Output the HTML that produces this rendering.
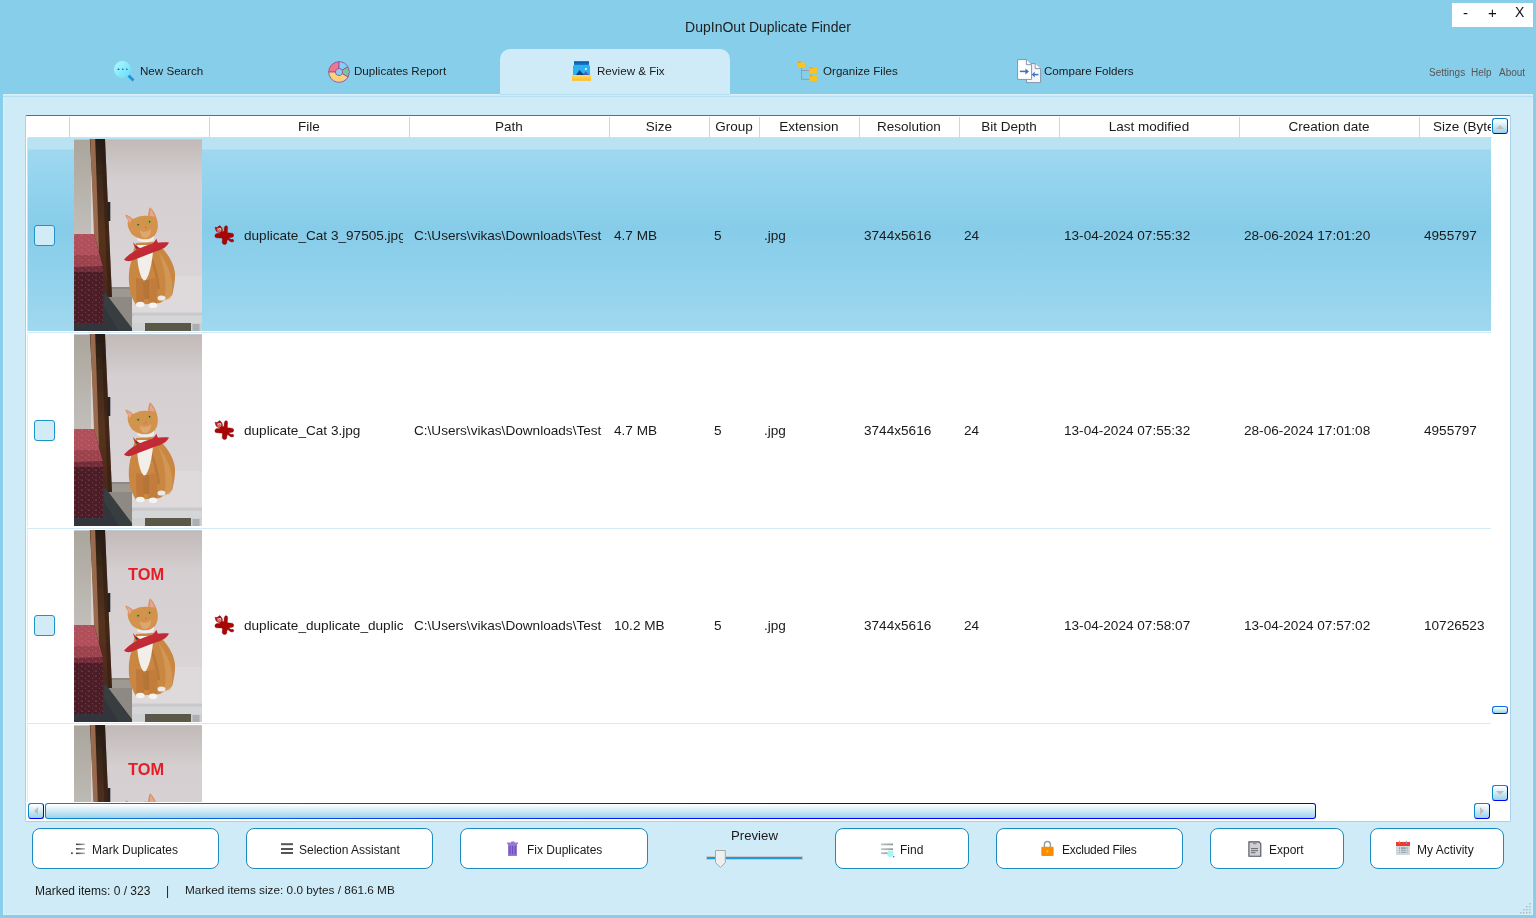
<!DOCTYPE html>
<html><head><meta charset="utf-8">
<style>
*{margin:0;padding:0;box-sizing:border-box}
html,body{width:1536px;height:918px;overflow:hidden}
body{background:#87CEEB;position:relative;font-family:"Liberation Sans",sans-serif;color:#1a1a1a}
.a{position:absolute}
.t{position:absolute;white-space:pre;line-height:1;will-change:transform}
.tab{font-size:11.6px;color:#1a1a1a}
.hd{font-size:13.5px;color:#1a1a1a;text-align:center}
.cell{font-size:13.6px;color:#1a1a1a;overflow:hidden}
.btn{position:absolute;top:828px;height:41px;background:#fff;border:1px solid #1b8cbf;border-radius:8px}
.bt{font-size:12px;color:#1a1a1a}
.sep{position:absolute;top:117px;width:1px;height:20px;background:#d4d4d4}
.chk{position:absolute;left:34px;width:21px;height:21px;border:1.3px solid #1f95c6;border-radius:3px;background:#d2ecf7}
.sb{position:absolute;border:1px solid #0000f0;border-color:#0a88c8 #0000ff #0000ff #0a88c8;border-radius:3px;background:linear-gradient(#fdfeff 5%,#cfeaf6 50%,#98d3ec)}
</style></head><body>
<svg width="0" height="0" style="position:absolute">
<defs>
<filter id="bl" x="-5%" y="-5%" width="110%" height="110%"><feGaussianBlur stdDeviation="0.6"/></filter>
<linearGradient id="bgg" x1="0" y1="0" x2="0" y2="1"><stop offset="0" stop-color="#c2bab8"/><stop offset="0.22" stop-color="#d5cfd1"/><stop offset="1" stop-color="#dcd7da"/></linearGradient>
<linearGradient id="bgl" x1="0" y1="0" x2="0" y2="1"><stop offset="0" stop-color="#aaa69c"/><stop offset="0.5" stop-color="#c2beba"/><stop offset="1" stop-color="#c8c4c2"/></linearGradient>
<linearGradient id="postg" x1="0" y1="0" x2="0" y2="1"><stop offset="0" stop-color="#261c12"/><stop offset="0.25" stop-color="#3e2a1a"/><stop offset="0.6" stop-color="#58321f"/><stop offset="1" stop-color="#4a2a1a"/></linearGradient>
<pattern id="speck" width="7" height="5" patternUnits="userSpaceOnUse"><circle cx="1" cy="1.2" r="0.6" fill="#f0c8cc"/><circle cx="4.5" cy="3.3" r="0.5" fill="#e8b0b8"/><circle cx="6" cy="0.5" r="0.4" fill="#d89098"/></pattern>
<symbol id="cat" viewBox="0 0 128 192">
<g filter="url(#bl)">
<rect x="0" y="0" width="128" height="192" fill="url(#bgg)"/>
<rect x="0" y="0" width="17" height="192" fill="url(#bgl)"/><rect x="0" y="0" width="128" height="1" fill="#c4c8cc"/>
<!-- floor -->
<rect x="30" y="148" width="30" height="44" fill="#8e8982"/>
<rect x="34" y="150" width="24" height="8" fill="#a8a49e" opacity="0.6"/>
<!-- post -->
<path d="M15.8 0 L31 0 L38 158 L25 158 Z" fill="url(#postg)"/>
<path d="M27 0 L31 0 L38 158 L34 158 Z" fill="#2e1a10" opacity="0.5"/>
<path d="M16.2 0 L21.2 0 L26.5 158 L22.5 158 Z" fill="#9a6a50"/>
<rect x="33.5" y="63" width="2.8" height="19" fill="#262420"/>
<!-- ottoman -->
<path d="M0 95 L20 95 L29 128 L29 185 L0 185 Z" fill="#4c1f28"/>
<path d="M0 95 L20 95 L28.5 127 L0 128 Z" fill="#b0505a"/>
<path d="M0 116 L25 116 L28.5 127 L29 133 L0 133 Z" fill="#8c3644" opacity="0.55"/>
<path d="M0 95 L20 95 L29 128 L29 185 L0 185 Z" fill="url(#speck)" opacity="0.35"/>
<!-- dark floor triangle -->
<path d="M30.5 153 L60 192 L0 192 L0 184 L29 184 L29 153 Z" fill="#30353a"/>
<path d="M30.5 153 L60 192 L45 192 L30 168 Z" fill="#3c4246" opacity="0.6"/>
<!-- stool -->
<path d="M58 137 L125 137 Q128 137 128 140 L128 174 L58 174 Z" fill="#dedadc"/>
<rect x="58" y="173.5" width="70" height="3.3" fill="#c9c9cb"/>
<rect x="58" y="176.8" width="70" height="7.4" fill="#d4d6d8"/>
<rect x="58" y="184" width="13" height="8" fill="#cfd1d3"/>
<rect x="71" y="184" width="46" height="8" fill="#5a5848"/>
<rect x="117" y="184" width="11" height="8" fill="#cdd0d2"/>
<rect x="118.5" y="185" width="7" height="7" fill="#8a8e90" opacity="0.5"/>
<!-- cat body -->
<path d="M58 120 C55 128 54 138 55.5 148 C56 156 60 162 62 166 L86 164 C92 160 98 158 98.5 155 C100 148 101.5 140 101 134 C100 126 96 118 90 111 C86 107 82 104 80 103 L62 104 C60 108 59 114 58 120 Z" fill="#c98742"/>
<path d="M84 112 C90 120 96 130 98 142 C99 150 98 156 96 160 L90 161 C93 148 92 130 84 112 Z" fill="#d9a060" opacity="0.6"/>
<path d="M78 118 C82 128 85 138 86 150 L83 150 C82 140 80 128 76 120 Z" fill="#a86a30" opacity="0.5"/>
<path d="M63 106 C62.5 122 65 136 70 143 C75 139 78.5 124 79.5 106 Z" fill="#f2eeea"/>
<!-- legs -->
<path d="M62 139 C62 148 62 158 63 166 L70 166 C70 157 70 147 69 140 Z" fill="#bf7a3a"/>
<path d="M75 140 C74 149 74 158 75 167 L83 167 C83 158 84 148 83 139 Z" fill="#c27c3a"/>
<path d="M69 141 L75 141 L75 160 L70 160 Z" fill="#a8682e" opacity="0.6"/>
<ellipse cx="66.3" cy="165.5" rx="4.3" ry="2.8" fill="#f6f4f2"/>
<ellipse cx="79" cy="166.3" rx="4.3" ry="2.8" fill="#f6f4f2"/>
<ellipse cx="87.5" cy="159" rx="4" ry="2.6" fill="#eceae8"/>
<!-- head -->
<path d="M51.4 75.4 C54 76 57 78 59 80 C64 77 70 76 74 77 C74.5 73 75 70 76 68.2 C79 71 81.5 75 82.5 79 C84.5 84 84.5 92 81 96 C78 100 74 100.5 71 100 C66 100 60 98 57 94 C54 90 53 85 54 81 C52.5 79 51.6 77 51.4 75.4 Z" fill="#d4934e"/>
<path d="M52.5 76.5 L58 80 L55.5 84.5 Z" fill="#e7a49a"/>
<path d="M76.5 69.5 L81 77.5 L75.5 77 Z" fill="#e7a49a"/>
<path d="M66 91 C68 93.5 74 93.5 77 90 C77.5 94 75 98.5 71.5 99 C68 99 66 95.5 66 91 Z" fill="#dca870"/><path d="M64 99 C68 102 76 101 80 97 L80 101 C76 104 68 104 63 101 Z" fill="#f2ece6"/>
<circle cx="64" cy="85.6" r="2.1" fill="#a8a444"/><circle cx="64.2" cy="85.8" r="0.8" fill="#3a3020"/>
<circle cx="75.4" cy="82.6" r="2.1" fill="#a8a444"/><circle cx="75.6" cy="82.8" r="0.8" fill="#3a3020"/>
<circle cx="71.8" cy="88.5" r="1.1" fill="#d0706a"/>
<!-- bandana -->
<path d="M50 120.5 C55 115 62 110.5 70 107.5 C78 104.5 86 102.5 95 103.5 C93 108 88 110.5 83 112 C76 114.5 66 118.5 58 121.5 C55 122.5 52 122.5 50 120.5 Z" fill="#c02a36"/>
<path d="M59 103 C62 107.5 66 109.5 70 109.5 C76 108 80 104 82.4 99.8 L84 104 C81 109.5 76 113 70 114 C65 114 60.5 110 59 103 Z" fill="#c42c38"/>
<circle cx="62.8" cy="108.6" r="1" fill="#304840"/>
</g>
</symbol>
<symbol id="irf" viewBox="0 0 20 20">
<path d="M1 2.2 L3 2.6 L5.9 0.6 L7.6 2.4 C8.4 3.6 8.6 5 8.4 6.4 L10.2 6.6 C10 4.5 10 2 11 1.2 C12 0.5 13.6 0.8 13.6 2.5 C13.6 4.5 13.2 6.2 13.4 7.8 C15 8 17 8.2 18.6 8.4 C19.8 8.8 20 10.8 19 12 C17.6 12.6 16 12.4 15.2 12.8 C15.6 13.8 16.4 14.4 17.4 14.4 C18.6 14.2 19.8 14.6 19.8 15.8 C19.6 17 18 17.2 17 16.8 C15.6 16.2 14.6 15.6 14 14.6 C13.2 15 12.8 16 12.8 17.4 C12.8 19 11.2 19.6 10 19.4 C8.6 19 8 18 8.2 16.8 C8.4 15.2 8.6 14 8 13 C6.4 12.8 4.4 13 2.6 12.8 C1.2 12.6 0.8 11.4 1 10.2 C1.2 8.8 3 8.4 4.6 8.6 C5.4 8.6 6 8.2 6.2 7.6 C4.8 7.4 3 7.2 2.2 6 C1.4 4.8 1.6 3.4 1 2.2 Z" fill="#a80606" stroke="#7a0000" stroke-width="0.4"/>
<path d="M2.6 3.6 C3.6 2.6 6 2.2 7.4 3.4 C8 4.8 7.6 6.4 6.4 7.2 C5 7.6 3.4 7 2.8 5.8 Z" fill="#d86060"/>
<ellipse cx="5.8" cy="4.3" rx="1.4" ry="1" fill="#f4e8e8"/>
<circle cx="5.9" cy="4.5" r="0.5" fill="#402020"/>
</symbol>
</defs>
</svg>


<!-- title -->
<div class="t" style="left:0;width:1536px;text-align:center;top:19.5px;font-size:14px;color:#1e1e1e">DupInOut Duplicate Finder</div>

<!-- window controls -->
<div class="a" style="left:1452px;top:3px;width:81px;height:24px;background:#fff"></div>
<div class="t" style="left:1462.7px;top:5px;font-size:15px;color:#111">-</div>
<div class="t" style="left:1488.2px;top:5px;font-size:15px;color:#111">+</div>
<div class="t" style="left:1514.7px;top:5px;font-size:14px;color:#111">X</div>

<!-- active tab -->
<div class="a" style="left:500px;top:49px;width:230px;height:46px;background:#cfebf7;border-radius:10px 10px 0 0"></div>


<!-- tab icons -->
<svg class="a" style="left:113px;top:60px" width="24" height="24" viewBox="0 0 24 24">
<defs><linearGradient id="mg" x1="0" y1="0" x2="1" y2="1"><stop offset="0" stop-color="#b2fbfe"/><stop offset="1" stop-color="#62daf6"/></linearGradient></defs>
<path d="M15.5 15.5 L20.5 20.5" stroke="#1d94e0" stroke-width="2.8" stroke-linecap="butt"/>
<circle cx="9.5" cy="9.5" r="8.5" fill="url(#mg)"/>
<path d="M4.1 9.9 L5.5 8 L6.9 9.9 Z M8.8 9.9 L9.6 8 L11 9.9 Z M13 9.9 L13.6 8 L15.1 9.9 Z" fill="#2a70d0"/>
</svg>
<svg class="a" style="left:327px;top:60px" width="24" height="24" viewBox="0 0 24 24">
<g stroke="#9a4e9c" stroke-width="0.9" stroke-linejoin="round">
<path d="M12.00 1.70 A10.3 10.3 0 0 0 1.70 12.00 L8.40 12.00 A3.6 3.6 0 0 1 12.00 8.40 Z" fill="#f0768f"/>
<path d="M20.92 6.85 A10.3 10.3 0 0 0 12.00 1.70 L12.00 8.40 A3.6 3.6 0 0 1 15.12 10.20 Z" fill="#86cef4"/>
<path d="M21.09 16.84 A10.3 10.3 0 0 0 20.92 6.85 L15.12 10.20 A3.6 3.6 0 0 1 15.18 13.69 Z" fill="#6ccc9c"/>
<path d="M1.70 12.00 A10.3 10.3 0 0 0 21.09 16.84 L15.18 13.69 A3.6 3.6 0 0 1 8.40 12.00 Z" fill="#fcd27e"/>
</g>
</svg>
<svg class="a" style="left:572px;top:61px" width="20" height="20" viewBox="0 0 20 20">
<defs><linearGradient id="rbar" x1="0" y1="0" x2="0" y2="1"><stop offset="0" stop-color="#4a8ccc"/><stop offset="0.25" stop-color="#0b5aa8"/><stop offset="1" stop-color="#1a8ae0"/></linearGradient>
<linearGradient id="ryel" x1="0" y1="0" x2="0" y2="1"><stop offset="0" stop-color="#ffdc64"/><stop offset="1" stop-color="#ffbc1c"/></linearGradient></defs>
<rect x="2" y="0" width="15" height="4.7" fill="url(#rbar)"/>
<rect x="1" y="4.6" width="17" height="9.6" fill="#2bb2ec"/>
<path d="M10 14 L13.8 10.6 L17.2 14 Z" fill="#4a5cc8"/>
<path d="M4 14 L7.5 9 L12 14 Z" fill="#163f86"/>
<circle cx="13.9" cy="8" r="1" fill="#fff"/>
<rect x="0" y="14" width="19" height="5.8" fill="url(#ryel)"/>
</svg>
<svg class="a" style="left:797px;top:61px" width="21" height="21" viewBox="0 0 21 21">
<path d="M4.5 6.5 V18.3 H12.5 M4.5 9.5 H12.5" stroke="#8c9aa6" stroke-width="0.9" fill="none"/>
<rect x="0.8" y="1.6" width="7.2" height="5.4" fill="#fcc21e"/><rect x="0.8" y="0.6" width="3" height="1.4" rx="0.5" fill="#f3a000"/>
<rect x="12.5" y="7" width="7.4" height="5.2" fill="#fcc21e"/><rect x="12.5" y="6.2" width="3" height="1.3" rx="0.5" fill="#f3a000"/>
<rect x="12.5" y="15" width="7.4" height="5" fill="#fcc21e"/><rect x="12.5" y="14.2" width="3" height="1.3" rx="0.5" fill="#f3a000"/>
</svg>
<svg class="a" style="left:1017px;top:59px" width="25" height="25" viewBox="0 0 25 25">
<path d="M9.5 4.6 H18.2 L23.6 9.6 V23.6 H9.5 Z" fill="#f2f7fd" stroke="#8894a6" stroke-width="1"/>
<path d="M18.2 4.6 V9.6 H23.6" fill="#fff" stroke="#8894a6" stroke-width="1"/>
<path d="M0.6 0.6 H9.4 L14.6 5.7 V20.4 H0.6 Z" fill="#fff" stroke="#8894a6" stroke-width="1"/>
<path d="M9.4 0.6 V5.7 H14.6" fill="#fff" stroke="#8894a6" stroke-width="1"/>
<path d="M2.8 12.4 H9.5" stroke="#3f74bc" stroke-width="1.5"/><path d="M8.4 9.5 L12 12.4 L8.4 15.4 Z" fill="#3f74bc"/>
<path d="M21.4 15.6 H17" stroke="#3f74bc" stroke-width="1.5"/><path d="M17.7 12.8 L14.8 15.6 L17.7 18.6 Z" fill="#3f74bc"/>
</svg>

<!-- tab labels -->
<div class="t tab" style="left:140px;top:65px">New Search</div>
<div class="t tab" style="left:354px;top:65px">Duplicates Report</div>
<div class="t tab" style="left:597px;top:65px">Review &amp; Fix</div>
<div class="t tab" style="left:823px;top:65px">Organize Files</div>
<div class="t tab" style="left:1044px;top:65px">Compare Folders</div>
<div class="t" style="left:1429px;top:68px;font-size:10px;color:#5a5454">Settings</div>
<div class="t" style="left:1471px;top:68px;font-size:10px;color:#5a5454">Help</div>
<div class="t" style="left:1499px;top:68px;font-size:10px;color:#5a5454">About</div>

<!-- main panel -->
<div class="a" style="left:3px;top:94px;width:1530px;height:821px;background:#cfebf7;border-left:1px solid #dcf0f9;border-right:1px solid #d8eef8;border-bottom:1px solid #d8eef8"></div>
<div class="a" style="left:3px;top:94px;width:1530px;height:1px;background:#d9eff9"></div><div class="a" style="left:500px;top:94px;width:230px;height:1px;background:#b4dff0"></div><div class="a" style="left:3px;top:96px;width:1530px;height:1px;background:#b4dff0"></div>

<!-- grid -->
<div class="a" style="left:25px;top:115px;width:1486px;height:707px;background:#fff;border:1px solid #a9d1e8;border-top:1px solid #3b77af;border-radius:2px"></div>

<!-- header separators -->
<div class="sep" style="left:69px"></div>
<div class="sep" style="left:209px"></div>
<div class="sep" style="left:409px"></div>
<div class="sep" style="left:609px"></div>
<div class="sep" style="left:709px"></div>
<div class="sep" style="left:759px"></div>
<div class="sep" style="left:859px"></div>
<div class="sep" style="left:959px"></div>
<div class="sep" style="left:1059px"></div>
<div class="sep" style="left:1239px"></div>
<div class="sep" style="left:1419px"></div>
<div class="a" style="left:28px;top:137px;width:1464px;height:1px;background:#dcdcdc"></div>

<div class="t hd" style="left:209px;width:200px;top:120px">File</div>
<div class="t hd" style="left:409px;width:200px;top:120px">Path</div>
<div class="t hd" style="left:609px;width:100px;top:120px">Size</div>
<div class="t hd" style="left:709px;width:50px;top:120px">Group</div>
<div class="t hd" style="left:759px;width:100px;top:120px">Extension</div>
<div class="t hd" style="left:859px;width:100px;top:120px">Resolution</div>
<div class="t hd" style="left:959px;width:100px;top:120px">Bit Depth</div>
<div class="t hd" style="left:1059px;width:180px;top:120px">Last modified</div>
<div class="t hd" style="left:1239px;width:180px;top:120px">Creation date</div>
<div class="t hd" style="left:1419px;width:72px;top:120px;text-align:left;padding-left:14px;overflow:hidden">Size (Bytes)</div>

<div class="a" style="left:26px;top:138px;width:1465px;height:664px;overflow:hidden">
<div class="a" style="left:1px;top:0px;width:1464px;height:193px;background:linear-gradient(#b9e2f3 0px,#b9e2f3 11px,#9fd8ef 12px,#8fd1ec 60px,#86cce9 90px,#8fd1ec 130px,#a0d8ef 193px);border-left:1px solid #c6e6f4"></div>
<svg class="a" style="left:48px;top:1px" width="128" height="192"><use href="#cat"/></svg>
<div class="chk" style="left:8px;top:87px"></div>
<svg class="a" style="left:188px;top:87px" width="20" height="20"><use href="#irf"/></svg>
<div class="t cell" style="left:218px;top:91px;width:159px;height:18px">duplicate_Cat 3_97505.jpg</div>
<div class="t cell" style="left:388px;top:91px;width:189px;height:18px">C:\Users\vikas\Downloads\Test</div>
<div class="t cell" style="left:588px;top:91px;width:95px;height:18px">4.7 MB</div>
<div class="t cell" style="left:688px;top:91px;width:45px;height:18px">5</div>
<div class="t cell" style="left:738px;top:91px;width:95px;height:18px">.jpg</div>
<div class="t cell" style="left:838px;top:91px;width:95px;height:18px">3744x5616</div>
<div class="t cell" style="left:938px;top:91px;width:95px;height:18px">24</div>
<div class="t cell" style="left:1038px;top:91px;width:175px;height:18px">13-04-2024 07:55:32</div>
<div class="t cell" style="left:1218px;top:91px;width:175px;height:18px">28-06-2024 17:01:20</div>
<div class="t cell" style="left:1398px;top:91px;width:67px;height:18px">4955797</div>
<div class="a" style="left:1px;top:194px;width:1464px;height:1px;background:#d3ebf6"></div>
<div class="a" style="left:1px;top:196px;width:1px;height:193px;background:#dceff8"></div>
<svg class="a" style="left:48px;top:196px" width="128" height="192"><use href="#cat"/></svg>
<div class="chk" style="left:8px;top:282px"></div>
<svg class="a" style="left:188px;top:282px" width="20" height="20"><use href="#irf"/></svg>
<div class="t cell" style="left:218px;top:286px;width:159px;height:18px">duplicate_Cat 3.jpg</div>
<div class="t cell" style="left:388px;top:286px;width:189px;height:18px">C:\Users\vikas\Downloads\Test</div>
<div class="t cell" style="left:588px;top:286px;width:95px;height:18px">4.7 MB</div>
<div class="t cell" style="left:688px;top:286px;width:45px;height:18px">5</div>
<div class="t cell" style="left:738px;top:286px;width:95px;height:18px">.jpg</div>
<div class="t cell" style="left:838px;top:286px;width:95px;height:18px">3744x5616</div>
<div class="t cell" style="left:938px;top:286px;width:95px;height:18px">24</div>
<div class="t cell" style="left:1038px;top:286px;width:175px;height:18px">13-04-2024 07:55:32</div>
<div class="t cell" style="left:1218px;top:286px;width:175px;height:18px">28-06-2024 17:01:08</div>
<div class="t cell" style="left:1398px;top:286px;width:67px;height:18px">4955797</div>
<div class="a" style="left:1px;top:390px;width:1464px;height:1px;background:#d3ebf6"></div>
<div class="a" style="left:1px;top:391px;width:1px;height:193px;background:#dceff8"></div>
<svg class="a" style="left:48px;top:392px" width="128" height="192"><use href="#cat"/></svg>
<div class="t" style="left:56px;top:428px;width:128px;text-align:center;font-weight:bold;font-size:16.4px;color:#e41e26">TOM</div>
<div class="chk" style="left:8px;top:477px"></div>
<svg class="a" style="left:188px;top:477px" width="20" height="20"><use href="#irf"/></svg>
<div class="t cell" style="left:218px;top:481px;width:159px;height:18px">duplicate_duplicate_duplicate_Cat 3.jpg</div>
<div class="t cell" style="left:388px;top:481px;width:189px;height:18px">C:\Users\vikas\Downloads\Test</div>
<div class="t cell" style="left:588px;top:481px;width:95px;height:18px">10.2 MB</div>
<div class="t cell" style="left:688px;top:481px;width:45px;height:18px">5</div>
<div class="t cell" style="left:738px;top:481px;width:95px;height:18px">.jpg</div>
<div class="t cell" style="left:838px;top:481px;width:95px;height:18px">3744x5616</div>
<div class="t cell" style="left:938px;top:481px;width:95px;height:18px">24</div>
<div class="t cell" style="left:1038px;top:481px;width:175px;height:18px">13-04-2024 07:58:07</div>
<div class="t cell" style="left:1218px;top:481px;width:175px;height:18px">13-04-2024 07:57:02</div>
<div class="t cell" style="left:1398px;top:481px;width:67px;height:18px">10726523</div>
<div class="a" style="left:1px;top:585px;width:1464px;height:1px;background:#d3ebf6"></div>
<div class="a" style="left:1px;top:586px;width:1px;height:193px;background:#dceff8"></div>
<svg class="a" style="left:48px;top:587px" width="128" height="192"><use href="#cat"/></svg>
<div class="t" style="left:56px;top:623px;width:128px;text-align:center;font-weight:bold;font-size:16.4px;color:#e41e26">TOM</div>
</div>


<!-- scrollbars -->
<div class="sb" style="left:1492px;top:118px;width:16px;height:16px;border-color:#0a84c8 #0a3ce8 #0000ff #0a84c8"></div>
<svg class="a" style="left:1492px;top:118px" width="16" height="16"><path d="M4 11 L8 7 L12 11 Z" fill="#c4bcbc"/></svg>
<div class="sb" style="left:1492px;top:706px;width:16px;height:8px;border-radius:3px;border-color:#0a6ee0 #0a3ce8 #0000ff #0a6ee0"></div>
<div class="sb" style="left:1492px;top:785px;width:16px;height:16px"></div>
<svg class="a" style="left:1492px;top:785px" width="16" height="16"><path d="M4 6 L12 6 L8 10 Z" fill="#c4bcbc"/></svg>
<div class="sb" style="left:28px;top:803px;width:16px;height:16px"></div>
<svg class="a" style="left:28px;top:803px" width="16" height="16"><path d="M10 4 L10 12 L6 8 Z" fill="#c4bcbc"/></svg>
<div class="a" style="left:45px;top:803px;width:1271px;height:16px;border-radius:3px;background:linear-gradient(to right,#0a88c8,#0a40e8 25%,#0000ff 60%)"><div class="a" style="left:1px;top:1px;right:1px;bottom:1px;border-radius:2px;background:linear-gradient(#fdfeff 5%,#cfeaf6 50%,#98d3ec)"></div></div>
<div class="sb" style="left:1474px;top:803px;width:16px;height:16px"></div>
<svg class="a" style="left:1474px;top:803px" width="16" height="16"><path d="M6 4 L6 12 L10 8 Z" fill="#c4bcbc"/></svg>

<!-- bottom buttons -->
<div class="btn" style="left:32px;width:187px"></div>
<div class="btn" style="left:246px;width:187px"></div>
<div class="btn" style="left:460px;width:188px"></div>
<div class="btn" style="left:835px;width:134px"></div>
<div class="btn" style="left:996px;width:187px"></div>
<div class="btn" style="left:1210px;width:134px"></div>
<div class="btn" style="left:1370px;width:134px"></div>

<div class="t bt" style="left:92px;top:844px">Mark Duplicates</div>
<div class="t bt" style="left:299px;top:844px">Selection Assistant</div>
<div class="t bt" style="left:527px;top:844px">Fix Duplicates</div>
<div class="t bt" style="left:900px;top:844px">Find</div>
<div class="t bt" style="left:1061.5px;top:844px;letter-spacing:-0.25px">Excluded Files</div>
<div class="t bt" style="left:1269px;top:844px">Export</div>
<div class="t bt" style="left:1417px;top:844px">My Activity</div>


<!-- button icons -->
<svg class="a" style="left:70px;top:842px" width="16" height="14" viewBox="0 0 16 14">
<defs><linearGradient id="lg1" x1="0" x2="1"><stop offset="0" stop-color="#333"/><stop offset="1" stop-color="#bbb"/></linearGradient></defs>
<rect x="1" y="10.3" width="1.8" height="1.8" fill="#555"/>
<rect x="6" y="1.6" width="9" height="1.5" fill="url(#lg1)"/><rect x="6" y="6.1" width="9" height="1.5" fill="url(#lg1)"/><rect x="6" y="10.6" width="9" height="1.5" fill="url(#lg1)"/>
</svg>
<svg class="a" style="left:280px;top:842px" width="15" height="14" viewBox="0 0 15 14">
<rect x="1" y="1.2" width="12" height="2" fill="#555"/><rect x="1" y="6" width="12" height="2" fill="#555"/><rect x="1" y="10" width="12" height="2" fill="#555"/>
</svg>
<svg class="a" style="left:507px;top:841px" width="12" height="16" viewBox="0 0 12 16">
<rect x="4" y="0.6" width="3.6" height="1.6" rx="0.8" fill="#8a6cd0"/>
<rect x="0" y="1.5" width="11" height="1.6" fill="#9a7ad6"/>
<rect x="1" y="3" width="9" height="12" fill="#9878d4"/>
<rect x="2.3" y="4.8" width="1.3" height="8.5" fill="#6c4fba"/><rect x="4.9" y="4.8" width="1.3" height="8.5" fill="#6c4fba"/><rect x="7.5" y="4.8" width="1.3" height="8.5" fill="#6c4fba"/>
</svg>
<svg class="a" style="left:880px;top:842px" width="16" height="16" viewBox="0 0 16 16">
<defs><linearGradient id="lg2" x1="0" x2="1"><stop offset="0" stop-color="#c0c4c4"/><stop offset="1" stop-color="#8c9898"/></linearGradient></defs>
<rect x="1" y="1.5" width="12" height="1.8" fill="url(#lg2)"/><rect x="1" y="6.3" width="12" height="1.8" fill="url(#lg2)"/><rect x="1" y="10.3" width="7" height="1.8" fill="url(#lg2)"/>
<circle cx="10.4" cy="11.8" r="3.2" fill="#a6f6f8"/><rect x="13" y="14" width="1.4" height="1.4" fill="#2d8fe0"/>
</svg>
<svg class="a" style="left:1041px;top:840px" width="13" height="17" viewBox="0 0 13 17">
<path d="M3.4 7 V4.5 A3 3 0 0 1 9.4 4.5 V7" stroke="#8ea0a6" stroke-width="1.4" fill="none"/>
<rect x="0.3" y="6.7" width="12.3" height="9.4" rx="1" fill="#fb8c00"/>
<circle cx="6.4" cy="11.4" r="1.1" fill="#f9c416"/>
</svg>
<svg class="a" style="left:1248px;top:841px" width="14" height="16" viewBox="0 0 14 16">
<path d="M0.9 0.9 H11 L12.8 2.7 V15.2 H0.9 Z" fill="#d0d0d0" stroke="#4c5260" stroke-width="1.1"/>
<rect x="3" y="7.2" width="7" height="0.9" fill="#5a5a5a"/><rect x="3" y="9.3" width="7" height="0.9" fill="#5a5a5a"/><rect x="3" y="11.3" width="4.5" height="0.9" fill="#5a5a5a"/><rect x="5" y="2.4" width="3.5" height="0.8" fill="#6a6a6a"/>
</svg>
<svg class="a" style="left:1396px;top:840px" width="15" height="16" viewBox="0 0 15 16">
<rect x="0" y="2" width="14" height="13" rx="1" fill="#cfd8dc"/>
<rect x="0" y="2" width="14" height="4" fill="#ef3a30"/>
<rect x="3" y="0.8" width="1.1" height="3" fill="#90a4ae"/><rect x="9.8" y="0.8" width="1.1" height="3" fill="#90a4ae"/>
<g fill="#8fa0a8"><rect x="3" y="7.3" width="1" height="1.6"/><rect x="5" y="7.3" width="4.8" height="1.6"/><rect x="10.6" y="7.3" width="1" height="1.6"/>
<rect x="3" y="9.7" width="1" height="1"/><rect x="5" y="9.7" width="4.8" height="1"/><rect x="10.6" y="9.7" width="1" height="1"/>
<rect x="3" y="11.8" width="1" height="1"/><rect x="5" y="11.8" width="4.8" height="1"/><rect x="10.6" y="11.8" width="1" height="1"/></g>
</svg>
<!-- slider -->
<div class="a" style="left:706px;top:856px;width:97px;height:4px;background:#c8c8c8"></div>
<div class="a" style="left:707px;top:857px;width:95px;height:2px;background:#1e9ad6"></div>
<svg class="a" style="left:714px;top:849px" width="13" height="20" viewBox="0 0 13 20"><path d="M1.5 1.5 H11.3 V13.5 L6.4 18.5 L1.5 13.5 Z" fill="#efefef" stroke="#a8a8a8" stroke-width="1"/></svg>
<!-- resize grip -->
<svg class="a" style="left:1520px;top:902px" width="12" height="12"><g fill="#b0bcc8"><rect x="9" y="1" width="1.5" height="1.5"/><rect x="6" y="4" width="1.5" height="1.5"/><rect x="9" y="4" width="1.5" height="1.5"/><rect x="3" y="7" width="1.5" height="1.5"/><rect x="6" y="7" width="1.5" height="1.5"/><rect x="9" y="7" width="1.5" height="1.5"/><rect x="0" y="10" width="1.5" height="1.5"/><rect x="3" y="10" width="1.5" height="1.5"/><rect x="6" y="10" width="1.5" height="1.5"/><rect x="9" y="10" width="1.5" height="1.5"/></g></svg>

<!-- preview slider -->
<div class="t" style="left:731px;top:829px;font-size:13.2px">Preview</div>

<!-- status -->
<div class="t" style="left:35px;top:884.5px;font-size:12px">Marked items: 0 / 323</div>
<div class="t" style="left:166px;top:884.5px;font-size:12px">|</div>
<div class="t" style="left:184.5px;top:884.5px;font-size:11.8px">Marked items size: 0.0 bytes / 861.6 MB</div>

</body></html>
